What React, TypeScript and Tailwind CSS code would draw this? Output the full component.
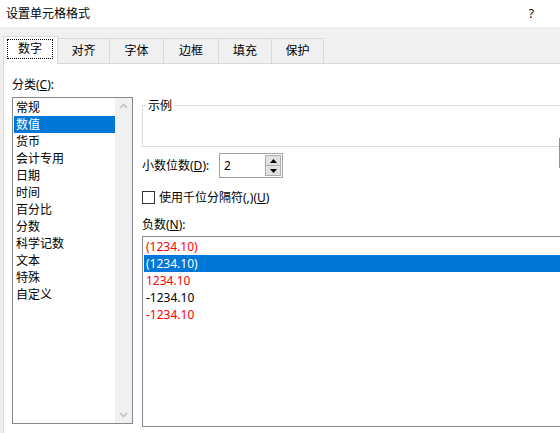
import React from 'react';

const categories = ['常规', '数值', '货币', '会计专用', '日期', '时间', '百分比', '分数', '科学记数', '文本', '特殊', '自定义'];

const negatives = [
  { text: '(1234.10)', red: true },
  { text: '(1234.10)', red: false },
  { text: '1234.10', red: true },
  { text: '-1234.10', red: false },
  { text: '-1234.10', red: true },
];

const tabs = [
  { label: '对齐', w: 'w-[52px]' },
  { label: '字体', w: 'w-[54px]' },
  { label: '边框', w: 'w-[55px]' },
  { label: '填充', w: 'w-[53px]' },
  { label: '保护', w: 'w-[52px]' },
];

function Chevron({ up }: { up?: boolean }) {
  return (
    <svg width="9" height="6" viewBox="0 0 9 6" className="text-[#c2c2c2]">
      <path d={up ? 'M1 5 L4.5 1.5 L8 5' : 'M1 1 L4.5 4.5 L8 1'} fill="none" stroke="currentColor" strokeWidth="1.6" />
    </svg>
  );
}

export default function App() {
  return (
    <div className="relative w-[560px] h-[433px] overflow-hidden bg-white flex flex-col font-['Noto_Sans','Noto_Sans_CJK_SC',sans-serif] text-[12px] text-black">
      <div className="h-[27px] shrink-0 flex items-center justify-between pl-[6px] pr-[26px] pt-[1px]">
        <span>设置单元格格式</span>
        <span>?</span>
      </div>

      <div className="flex-1 min-h-0 bg-[#f0f0f0] pl-[3px] pt-[9px] flex flex-col">
        <div className="flex items-end h-[27px] shrink-0">
          <div className="relative z-10 -mb-px h-[28px] w-[55px] bg-white border border-b-0 border-[#d9d9d9] flex items-start justify-start pt-[2px] pl-[3px]">
            <span className="w-[46px] h-[20px] border border-dotted border-black flex items-center justify-center">数字</span>
          </div>
          {tabs.map((t) => (
            <div key={t.label} className={`${t.w} h-[25px] border-t border-r border-[#d9d9d9] flex items-center justify-center`}>
              {t.label}
            </div>
          ))}
        </div>

        <div className="flex-1 min-h-0 bg-white border-t border-l border-[#d9d9d9] flex pl-[8px]">
          {/* left column */}
          <div className="flex flex-col pt-[12px]">
            <div className="h-[17px] leading-[17px]">
              分类(<span className="underline">C</span>):
            </div>
            <div className="mt-[4px] w-[121px] h-[327px] border border-[#828790] flex">
              <div className="flex-1 pt-px pl-px">
                {categories.map((c) => (
                  <div
                    key={c}
                    className={c === '数值' ? 'h-[17px] leading-[17px] pl-[2px] bg-[#0078d7] text-white' : 'h-[17px] leading-[17px] pl-[2px]'}
                  >
                    {c}
                  </div>
                ))}
              </div>
              <div className="w-[17px] bg-[#f0f0f0] flex flex-col justify-between items-center py-[5px]">
                <Chevron up />
                <Chevron />
              </div>
            </div>
          </div>

          {/* right column */}
          <div className="ml-[9px] flex flex-col pt-[41px]">
            <div className="relative w-[430px] h-[42px] border border-[#dcdcdc]">
              <span className="absolute -top-[9px] left-[3px] bg-white px-[2px] leading-[17px]">示例</span>
            </div>

            <div className="mt-[6px] h-[25px] flex items-center">
              <span className="w-[77px]">
                小数位数(<span className="underline">D</span>):
              </span>
              <div className="w-[64px] h-[25px] border border-[#a0a0a0] flex items-center justify-between pl-[4px] pr-px">
                <span>2</span>
                <div className="flex flex-col w-[16px] h-[21px]">
                  <div className="flex-1 bg-[#e1e1e1] border border-[#adadad] flex items-center justify-center">
                    <svg width="7" height="4" viewBox="0 0 7 4"><path d="M0 4 L3.5 0 L7 4 Z" fill="#000" /></svg>
                  </div>
                  <div className="flex-1 bg-[#e1e1e1] border border-t-0 border-[#adadad] flex items-center justify-center">
                    <svg width="7" height="4" viewBox="0 0 7 4"><path d="M0 0 L3.5 4 L7 0 Z" fill="#000" /></svg>
                  </div>
                </div>
              </div>
            </div>

            <div className="mt-[11px] h-[17px] flex items-center gap-[4px]">
              <span className="w-[13px] h-[13px] border border-[#333333] bg-white" />
              <span>
                使用千位分隔符(,)(<span className="underline">U</span>)
              </span>
            </div>

            <div className="mt-[10px] h-[17px] leading-[17px]">
              负数(<span className="underline">N</span>):
            </div>
            <div className="mt-[3px] w-[430px] h-[191px] border border-[#828790] pt-px pl-px">
              {negatives.map((n, i) => (
                <div
                  key={i}
                  className={
                    i === 1
                      ? 'h-[17px] leading-[17px] pl-[2px] bg-[#0078d7] text-white'
                      : n.red
                      ? 'h-[17px] leading-[17px] pl-[2px] text-[#ff0000]'
                      : 'h-[17px] leading-[17px] pl-[2px]'
                  }
                >
                  {n.text}
                </div>
              ))}
            </div>
          </div>
        </div>
      </div>

      <div className="absolute right-0 top-[138px] w-px h-[30px] bg-[#df6a9b]" />
    </div>
  );
}
